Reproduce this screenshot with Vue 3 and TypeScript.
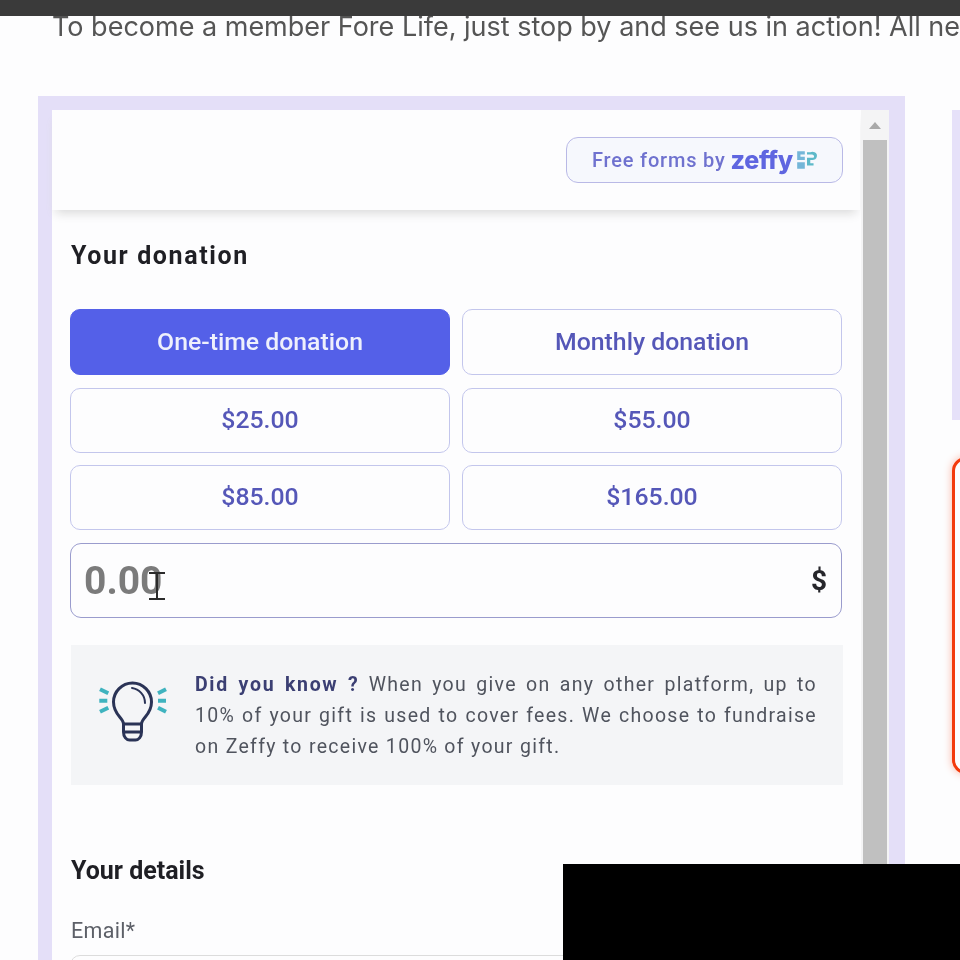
<script setup lang="ts">
const amounts: string[] = ['$25.00', '$55.00', '$85.00', '$165.00']
</script>

<template>
  <div class="page">
    <div class="topbar"></div>
    <p class="lead">To become a member Fore Life, just stop by and see us in action! All ne</p>
    <div class="columns">
      <section class="frame">
        <div class="form">
          <header class="form-head">
            <div class="badge">
              <span class="badge-text">Free forms by</span>
              <b class="zeffy">zeffy</b>
              <svg class="zeffy-logo" width="24" height="22" viewBox="0 0 22 20" fill="none">
                <path d="M2 2h7v3H5v2h4v3H2zM2 12h7v6H2z" fill="#74b6d8" />
                <path d="M11 5V3h3a4 4 0 0 1 4 0 3.500 3.500 0 0 1 2 4c-.5 2-2 3-4 3h-2v3h3v2h-6V8h5c1 0 1.500-.6 1.500-1.500S16 5 15 5z" fill="#5db9c9" />
              </svg>
            </div>
          </header>
          <div class="form-body">
            <h2 class="title donation">Your donation</h2>
            <div class="choices">
              <button class="choice tall active">One-time donation</button>
              <button class="choice tall">Monthly donation</button>
              <button v-for="a in amounts" :key="a" class="choice">{{ a }}</button>
            </div>
            <div class="amount">
              <span class="placeholder">0.00</span>
              <svg class="ibeam" width="18" height="30" viewBox="0 0 18 30" fill="none" stroke="#2b2b2b" stroke-width="2">
                <path d="M1 2h16M9 2v26M1 28h16" />
              </svg>
              <span class="currency">$</span>
            </div>
            <div class="tip">
              <svg class="bulb" width="72" height="64" viewBox="0 0 72 64" fill="none">
                <g stroke="#2a3356" stroke-width="3" stroke-linecap="round" stroke-linejoin="round">
                  <path d="M26.500 44c0-6-10-9-10-22a19 19 0 0 1 38 0c0 13-10 16-10 22z" />
                  <path d="M26.500 44v8c0 5 3 8 6 8h6c3 0 6-3 6-8v-8M27 52h17" />
                  <path d="M35 8c7 1 13 7 13 15" stroke-width="2" />
                </g>
                <g stroke="#3fb3bf" stroke-width="4">
                  <path d="M3 9.300l8.300 4M2.300 20.700h8M3 31.700l8.300-4M69 9.300l-8 4M69 20.700h-8M69 31.700l-8-4" />
                </g>
              </svg>
              <p class="tip-text"><b>Did you know ?</b> When you give on any other platform, up to 10% of your gift is used to cover fees. We choose to fundraise on Zeffy to receive 100% of your gift.</p>
            </div>
            <h2 class="title details">Your details</h2>
            <label class="email-label">Email*</label>
            <div class="email-input"></div>
          </div>
        </div>
        <div class="scrollbar">
          <div class="arrow"><i></i></div>
          <div class="thumb"></div>
        </div>
      </section>
      <aside class="side">
        <div class="side-card"></div>
        <div class="side-alert"></div>
      </aside>
    </div>
    <div class="mask"></div>
  </div>
</template>

<style>
html, body { margin: 0; background: #fdfdfe; }
</style>

<style scoped>
.page {
  position: relative;
  width: 960px;
  height: 960px;
  overflow: hidden;
  background: #fdfdfe;
  font-family: Roboto, "Liberation Sans", sans-serif;
}
.topbar { height: 16px; background: #3a3a3a; position: relative; z-index: 1; }
.lead {
  margin: 0 0 0 52px;
  height: 80px;
  font-family: Inter, "Noto Sans", sans-serif;
  font-size: 27px;
  line-height: 21px;
  color: #555;
  white-space: nowrap;
  filter: blur(0.6px);
}
.columns { display: flex; gap: 46px; padding-left: 38px; }
.frame {
  flex: 0 0 867px;
  height: 864px;
  box-sizing: border-box;
  display: flex;
  border: solid #e4dff8;
  border-width: 14px 16px 0 14px;
  background: #fdfdfe;
}
.form { flex: 1; min-width: 0; }
.form-head {
  height: 100px;
  box-sizing: border-box;
  padding: 27px 17px 0 0;
  display: flex;
  justify-content: flex-end;
  align-items: flex-start;
  box-shadow: 0 7px 10px -4px #d8d8d8;
}
.badge {
  width: 277px;
  height: 46px;
  box-sizing: border-box;
  display: flex;
  align-items: center;
  justify-content: center;
  gap: 5px;
  padding-left: 2px;
  border: 1.500px solid #b9b9e6;
  border-radius: 12px;
  background: #f6f8fd;
  color: #6f72cf;
  font-size: 20px;
  font-weight: 500;
  filter: blur(0.5px);
}
.badge-text { letter-spacing: 0.8px; }
.zeffy {
  font-family: Inter, "Noto Sans", sans-serif;
  font-size: 25px;
  font-weight: 800;
  color: #5f66e0;
  letter-spacing: -0.3px;
  margin-right: -3px;
}
.form-body { padding: 0 18px; filter: blur(0.5px); }
.title {
  margin: 30px 0 0 1px;
  font-size: 25px;
  line-height: 32px;
  font-weight: 700;
  color: #1f1f24;
}
.donation { letter-spacing: 1.600px; }
.choices {
  margin-top: 37px;
  display: grid;
  grid-template-columns: 1fr 1fr;
  gap: 12.500px 12px;
}
.choice {
  height: 65px;
  padding: 0 0 2px;
  border: 1px solid #c3c6ec;
  border-radius: 10px;
  background: #fdfdfe;
  color: #5557b8;
  font-family: inherit;
  font-size: 24.800px;
  font-weight: 500;
}
.choice.tall { height: 66px; }
.choice.active { background: #5460e8; border-color: #5460e8; color: #eef0fc; }
.amount {
  position: relative;
  margin-top: 13px;
  height: 75px;
  box-sizing: border-box;
  padding: 0 14px 0 13px;
  display: flex;
  align-items: center;
  justify-content: space-between;
  border: 1.500px solid #9a9ccd;
  border-radius: 11px;
}
.placeholder { font-size: 39px; font-weight: 700; color: #7b7b7b; }
.currency { font-size: 28px; font-weight: 700; color: #26262b; }
.ibeam { position: absolute; left: 77px; top: 27px; }
.tip {
  margin: 27px -1px 0 1px;
  height: 140px;
  box-sizing: border-box;
  padding: 0 26px;
  display: flex;
  align-items: center;
  gap: 26px;
  background: #f4f5f7;
}
.bulb { flex: none; margin-bottom: 6px; }
.tip-text {
  margin: 0;
  font-size: 19.500px;
  line-height: 31px;
  letter-spacing: 1.300px;
  color: #50545e;
  text-align: justify;
}
.tip-text b { color: #3b3f73; font-weight: 700; letter-spacing: 1.700px; }
.details { margin-top: 70px; }
.email-label { display: block; margin: 30px 0 0 1px; font-size: 21.500px; line-height: 28px; letter-spacing: 0.3px; color: #5d6068; }
.email-input { margin-top: 10px; height: 60px; border: 1px solid #dcdcdc; border-radius: 10px; }
.scrollbar { flex: 0 0 28px; box-sizing: border-box; background: #f4f4f5; margin-left: 1px; padding: 0 2px; }
.arrow { height: 30px; display: flex; justify-content: center; padding-top: 12px; box-sizing: border-box; }
.arrow i {
  width: 0;
  height: 0;
  border-left: 6px solid transparent;
  border-right: 6px solid transparent;
  border-bottom: 7px solid #a9a9a9;
}
.thumb { height: 800px; background: #c0c0c0; }
.side { flex: 1; display: flex; flex-direction: column; margin-top: 14px; padding-left: 1px; }
.side-card { height: 310px; background: #e6e1f9; }
.side-alert {
  margin-top: 37px;
  height: 317px;
  width: 60px;
  box-sizing: border-box;
  border: 3px solid #f33a0c;
  border-radius: 14px;
  box-shadow: 0 0 8px #f9b5a3;
  background: #fdfdfe;
}
.mask { position: absolute; left: 563px; top: 864px; width: 397px; height: 96px; background: #000; }
</style>
